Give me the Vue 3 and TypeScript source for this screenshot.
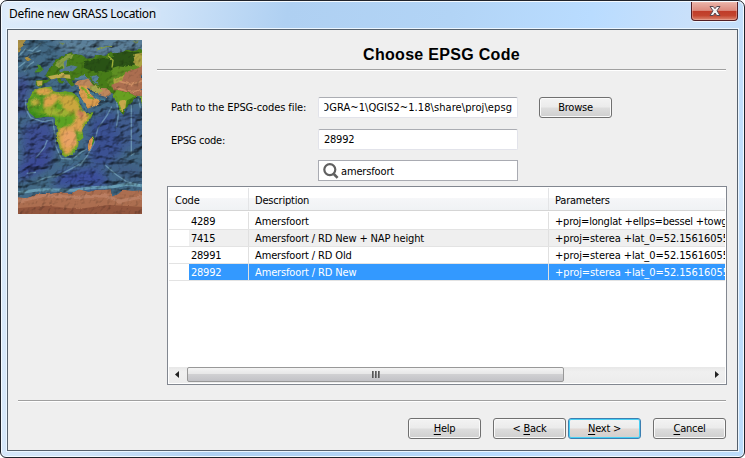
<script setup lang="ts">
interface EpsgRow {
  code: string
  description: string
  parameters: string
}

const rows: EpsgRow[] = [
  { code: '4289', description: 'Amersfoort', parameters: '+proj=longlat +ellps=bessel +towg' },
  { code: '7415', description: 'Amersfoort / RD New + NAP height', parameters: '+proj=sterea +lat_0=52.15616055' },
  { code: '28991', description: 'Amersfoort / RD Old', parameters: '+proj=sterea +lat_0=52.15616055' },
  { code: '28992', description: 'Amersfoort / RD New', parameters: '+proj=sterea +lat_0=52.15616055' },
]
const selected = '28992'
</script>

<template>
  <div class="window">
    <header class="titlebar">
      <span class="caption">Define new GRASS Location</span>
      <button class="close" aria-label="Close">
        <svg width="14" height="12" viewBox="0 0 14 12">
          <path d="M2 1.5H5.3L7 3.7L8.7 1.5H12L9 5.8L12 10.5H8.7L7 8L5.3 10.5H2L5 5.8Z" fill="#f4f4f4" stroke="#574750" stroke-width="1" stroke-linejoin="round" />
        </svg>
      </button>
    </header>

    <main class="client">
      <div class="page">
        <svg class="map" width="124" height="174" viewBox="24 15 372 522" preserveAspectRatio="none">
          <defs>
            <filter id="sea" x="0" y="0" width="100%" height="100%" color-interpolation-filters="sRGB">
              <feTurbulence type="fractalNoise" baseFrequency="0.03 0.045" numOctaves="4" seed="8" result="n" />
              <feDiffuseLighting in="n" surfaceScale="9" diffuseConstant="1.15" lighting-color="#ffffff" result="l">
                <feDistantLight azimuth="225" elevation="55" />
              </feDiffuseLighting>
              <feComposite in="SourceGraphic" in2="l" operator="arithmetic" k1="1" k2="0.05" k3="0" k4="0" />
            </filter>
            <filter id="land" x="0" y="0" width="100%" height="100%" color-interpolation-filters="sRGB">
              <feTurbulence type="fractalNoise" baseFrequency="0.06" numOctaves="3" seed="3" result="n" />
              <feDisplacementMap in="SourceGraphic" in2="n" scale="9" xChannelSelector="R" yChannelSelector="G" result="d" />
              <feDiffuseLighting in="n" surfaceScale="3" diffuseConstant="1.2" lighting-color="#ffffff" result="l">
                <feDistantLight azimuth="225" elevation="58" />
              </feDiffuseLighting>
              <feComposite in="d" in2="l" operator="arithmetic" k1="1" k2="0.02" k3="0" k4="0" result="c" />
              <feComposite in="c" in2="d" operator="in" />
            </filter>
            <filter id="soft"><feGaussianBlur stdDeviation="12" /></filter>
            <filter id="edge"><feGaussianBlur stdDeviation="3" /></filter>
            <filter id="shelf"><feGaussianBlur stdDeviation="2.2" /></filter>
            <clipPath id="africa">
              <path d="M72 165L90 158L124 154L130 168L150 172L162 168L184 171L198 176L206 196L219 224L229 235L251 231L244 248L225 270L217 286L221 308L207 320L204 338L190 358L166 367L156 360L145 327L139 310L144 286L134 268L135 250L124 244L98 247L77 250L57 232L51 217L56 190Z" />
            </clipPath>
          </defs>
          <g filter="url(#sea)">
            <rect x="24" y="15" width="372" height="522" fill="#406580" />
            <g filter="url(#soft)">
              <path d="M24 120L60 140L44 190L50 240L24 240Z" fill="#3c4690" />
              <path d="M36 270L120 255L136 320L130 370L40 380Z" fill="#3a4b8e" />
              <path d="M240 255L310 220L320 280L350 340L280 400L235 380Z" fill="#394e8c" />
              <path d="M24 390L110 360L130 390L90 410L24 440Z" fill="#374490" />
              <path d="M150 410L250 395L300 430L280 455L130 455Z" fill="#394894" />
              <path d="M300 370L396 390V440L320 430Z" fill="#3d5a80" />
              <path d="M320 240L390 220V350L330 330Z" fill="#3c5888" />
              <path d="M120 0H410V70H250L170 60Z" fill="#587a93" />
            </g>
            <g filter="url(#shelf)" fill="none" stroke="#80b0c2" stroke-width="4" opacity=".55">
              <path d="M48 192L46 220L62 248L98 260L128 255L133 286L138 335L154 370L184 372" />
              <path d="M24 98L48 79L62 57L92 46M24 65L46 43L68 48L94 24M43 109L58 90L72 80" />
              <path d="M190 370L216 350L230 342M208 393L230 365L252 325L264 280L292 240L305 215" />
              <path d="M320 200L325 240L319 278M364 211V360L374 354M385 190L391 218" />
              <path d="M80 440L106 428L140 423L174 406L218 383M285 390L320 420L350 440L390 450" />
              <path d="M77 370L103 337L112 315M50 415L78 412" />
            </g>
            <path filter="url(#shelf)" d="M24 473L90 464L190 466L242 458L306 456L350 448L396 452" fill="none" stroke="#76b0c2" stroke-width="9" opacity=".65" />
          </g>

          <g filter="url(#land)">
            <path d="M24 15H48L40 31L31 49L24 54ZM42 68L56 64L64 71L51 78Z" fill="#a58b42" />
            <path d="M78 136L76 151L92 158L103 145L118 139L124 127L142 133L156 151L163 143L150 129L164 128L175 143L185 155L195 150L185 137L205 135L222 129L243 136L245 150L258 161L278 160L298 171L310 177L322 190L329 228L340 241L348 220L358 211L371 197L382 184L396 184V43L367 48L351 43L330 56L304 51L286 62L264 59L247 70L230 70L216 60L201 58L185 51L162 60L140 72L128 88L117 102L105 122L118 133L96 135Z" fill="#467a18" />
            <path d="M74 113L90 112L101 104L91 90L80 88L85 99L77 105Z" fill="#488823" />
            <path d="M140 84L154 71L177 57L192 55L185 71L170 75L170 93L161 101L157 92L147 100L135 91Z" fill="#839b42" />
            <path d="M160 82L172 73L168 95L187 91L203 95L188 109L162 107L150 115L148 104L164 98Z" fill="#52788f" />
            <path d="M225 78L284 68L309 67L344 52L385 50L396 60V105L333 114L300 106L257 113L221 98Z" fill="#285015" />
            <path d="M307 99L341 88L396 53V130L344 141L303 157L286 141L307 128Z" fill="#5d8c22" />
            <path d="M310 56L350 48L376 56L380 88L340 96L306 90Z" fill="#2b5216" />
            <path d="M370 58L396 53V100L374 88ZM310 134L350 116L372 118L345 142L312 150Z" fill="#a8a040" />
            <path d="M346 111L377 102L396 94V183L374 182L347 171L311 166L304 149L335 139L340 128Z" fill="#a86c4e" />
            <path d="M328 139L365 149L396 137M315 157L358 171L393 165" fill="none" stroke="#c98a61" stroke-width="5" />
            <path d="M320 164L346 172L377 184L351 196L347 219L335 232L320 202L306 184Z" fill="#669d20" />
            <path d="M325 198L349 193L346 217L337 230Z" fill="#c3a449" />
            <path d="M388 184H396V215L390 200Z" fill="#7ba030" />
            <path d="M194 150L204 137L235 130L249 150L272 159L294 160L305 177L289 187L268 181L249 165L229 157Z" fill="#b9845a" />
            <path d="M237 152L263 152L279 171L264 177L246 168Z" fill="#a4a44a" />
            <path d="M205 150L229 152L239 166L252 185L273 195L262 210L233 222L221 202L207 179Z" fill="#d69a4d" />
            <path d="M213 157L226 165L238 188L253 191" fill="none" stroke="#7cab27" stroke-width="6" />
            <path d="M240 172L264 190L286 196" fill="none" stroke="#437990" stroke-width="6" />
            <path d="M78 138L98 137L96 151L83 154ZM114 124L153 116L180 119L182 132L161 128L140 130L123 134Z" fill="#b9a84c" />
            <path d="M244 124L261 119L265 132L258 139L268 149L254 147L246 136ZM188 132L210 122L224 120L236 130L223 134L200 134Z" fill="#557d95" />
            <path d="M306 98L309 76L294 62" fill="none" stroke="#9bad38" stroke-width="4" />
            <path d="M259 46L289 35L307 34" fill="none" stroke="#7f9848" stroke-width="4" />
            <path d="M145 22L168 24L160 32ZM362 17L390 16L380 24Z" fill="#718a5c" />
          </g>

          <g filter="url(#land)">
            <path d="M72 165L90 158L124 154L130 168L150 172L162 168L184 171L198 176L206 196L219 224L229 235L251 231L244 248L225 270L217 286L221 308L207 320L204 338L190 358L166 367L156 360L145 327L139 310L144 286L134 268L135 250L124 244L98 247L77 250L57 232L51 217L56 190Z" fill="#6fa021" />
            <g clip-path="url(#africa)">
              <g filter="url(#edge)">
                <path d="M51 190L74 181L100 168L122 184L106 208L90 231L58 228Z" fill="#4f9620" />
                <path d="M50 222L90 236L135 240L136 256L60 254Z" fill="#3a8a1c" />
                <path d="M77 165L105 158L129 166L115 180L83 177ZM103 190L136 175L151 184L138 200L125 214L101 218Z" fill="#d9a14b" />
                <path d="M62 196L84 190L90 206L66 214Z" fill="#b8ac3c" />
                <path d="M146 180L188 181L205 204L213 225L184 233L154 218Z" fill="#c7a43c" />
                <path d="M100 222L130 216L186 232L180 244L110 240Z" fill="#9cae30" />
                <path d="M137 204L158 205L157 225L140 229ZM158 170L194 172L190 182L160 180ZM134 246L184 240L193 270L163 283L139 270Z" fill="#5a9f22" />
                <path d="M194 232L215 226L239 244L221 265L215 295L203 312L198 345L167 360L154 337L145 307L150 280L180 274L199 254Z" fill="#d9a04f" />
                <path d="M205 222L222 232L219 250L205 246Z" fill="#c17653" />
                <path d="M194 285L216 292L217 308L200 318ZM185 345L206 323L204 348L180 366Z" fill="#65a329" />
                <path d="M161 292L182 285L197 293L195 327L169 338L158 320Z" fill="#e5a063" />
              </g>
            </g>
            <path d="M236 317L247 304L251 321L242 343L235 346L233 332Z" fill="#db9550" />
            <path d="M246 306L251 316L247 329" fill="none" stroke="#378d24" stroke-width="4" />
          </g>
          <path d="M202 177L230 224" stroke="#437990" stroke-width="6" />
          <g filter="url(#land)">
            <path d="M20 486L55 489L79 477L120 476L153 472L184 474L207 463L236 470L258 464L303 463L306 484L324 477L339 464L370 467L400 464V545H20Z" fill="#a96c4e" />
            <path d="M20 500L99 482L196 487L283 482L330 498L400 485" fill="none" stroke="#b67c60" stroke-width="10" />
            <path d="M20 520L110 512L200 522L300 510L400 516V545H20Z" fill="#8e533c" />
          </g>
        </svg>

        <section class="content">
          <h1>Choose EPSG Code</h1>
          <div class="form">
            <label class="l-path">Path to the EPSG-codes file:</label>
            <div class="field right"><span class="t-path">OGRA~1\QGIS2~1.18\share\proj\epsg</span></div>
            <button class="btn"><span>Browse</span></button>
            <label class="l-code">EPSG code:</label>
            <div class="field code"><span>28992</span></div>
            <div class="field search">
              <svg width="16" height="16" viewBox="0 0 16 16" fill="none" stroke="#606060">
                <circle cx="6.8" cy="6.6" r="5.5" stroke-width="2.2" />
                <path d="M10.8 11L14.6 14.8" stroke-width="2.6" />
              </svg>
              <span class="t-search">amersfoort</span>
            </div>
          </div>

          <div class="list">
            <div class="head">
              <span>Code</span><span>Description</span><span>Parameters</span>
            </div>
            <div v-for="row in rows" :key="row.code" class="row" :class="{ selected: row.code === selected }">
              <i class="indent"></i>
              <span class="c-code">{{ row.code }}</span>
              <span class="c-desc">{{ row.description }}</span>
              <span class="c-par">{{ row.parameters }}</span>
            </div>
            <div class="scroll">
              <svg class="arrow" width="18" height="16" viewBox="0 0 18 16"><path d="M6 7.5L10 4V11Z" fill="#222" /></svg>
              <div class="thumb"><i></i><i></i><i></i></div>
              <svg class="arrow end" width="18" height="16" viewBox="0 0 18 16"><path d="M12 7.5L8 4V11Z" fill="#222" /></svg>
            </div>
          </div>
        </section>
      </div>

      <footer>
        <button class="btn help"><span><u>H</u>elp</span></button>
        <button class="btn back"><span>&lt; <u>B</u>ack</span></button>
        <button class="btn next"><span><u>N</u>ext &gt;</span></button>
        <button class="btn"><span><u>C</u>ancel</span></button>
      </footer>
    </main>
  </div>
</template>

<style>
body { background: #fff; overflow: hidden; }
</style>

<style scoped>
* { box-sizing: border-box; }
.window {
  width: 745px; height: 458px; padding: 1px 6px 5px 6px;
  border: 1px solid #20232b; border-radius: 7px 7px 6px 6px;
  box-shadow: inset 0 0 0 1px #f4faff;
  background: linear-gradient(100deg, #dcebfa 0, #cfe3f8 20%, #afd0f2 35%, #b2d4f6 55%, #b9dcff 72%, #c9e0fa 84%, #bbdcfb 100%);
  font: 11px/13px "DejaVu Sans Condensed", "DejaVu Sans", sans-serif;
  font-stretch: condensed; letter-spacing: -0.25px; color: #000;
}
.titlebar { height: 27px; display: flex; justify-content: space-between; align-items: flex-start; }
.caption {
  padding: 4px 8px 3px 2px; font: 12px/16px "Noto Sans", sans-serif; letter-spacing: -0.32px;
  text-shadow: 0 0 8px #fff, 0 0 8px #fff;
}
.close {
  width: 47px; height: 19px; padding: 0; display: flex; align-items: center; justify-content: center;
  border: 1px solid #511e25; border-top: 0; border-radius: 0 0 4px 4px;
  background: linear-gradient(#eab4a9 0, #dc8b7e 47%, #bf3b28 50%, #c3452f 75%, #dc8671 100%);
  box-shadow: inset 0 0 0 1px #f2c2b866, 0 1px 0 #ffffffaa;
}
.client {
  height: 422px; border: 1px solid #56616d; background: #efefef;
  box-shadow: 0 0 0 1px #ecf6ff; padding: 10px 11px 0 10px; display: flex; flex-direction: column;
}
.page { display: flex; gap: 15px; height: 361px; border-bottom: 1px solid #a0a0a0; box-shadow: 0 1px 0 #fff; }
.map { display: block; flex: none; }
.content { flex: 1; min-width: 0; }
h1 {
  margin: 0; height: 30px; border-bottom: 1px solid #a0a0a0; box-shadow: 0 1px 0 #fff;
  font: bold 16px/29px "Liberation Sans", Arial, sans-serif; text-align: center; letter-spacing: 0.3px;
}
.form {
  display: grid; grid-template-columns: 147px 200px 94px; grid-template-rows: 21px 21px 21px;
  row-gap: 11px; padding: 27px 0 0 14px; height: 116px;
}
.form .btn { margin-left: 21px; }
label { line-height: 22px; white-space: nowrap; }
.l-path { letter-spacing: -0.08px; }
.l-code { line-height: 24px; }
.t-path { letter-spacing: 0.08px; clip-path: inset(0 0 0 3px); }
.t-search { letter-spacing: -0.15px; }
.field {
  background: #fff; border: 1px solid #e2e3ea; border-top-color: #abadb3; border-radius: 2px;
  padding: 0 5px; line-height: 19px; display: flex; overflow: hidden; white-space: nowrap;
}
.right { justify-content: flex-end; }
.code { grid-column: 2; }
.search { grid-column: 2; margin-top: -1px; height: 21px; border-color: #a9abb2; border-radius: 0; align-items: center; padding: 0 4px; gap: 2px; line-height: 19px; }
.search svg { display: block; }
.search span { padding-top: 1px; }
.btn {
  width: 73px; height: 21px; padding: 1px 0 0; border: 1px solid #707070; border-radius: 3px;
  background: linear-gradient(#f3f3f3 0, #ebebeb 48%, #dddddd 52%, #cfcfcf 100%);
  box-shadow: inset 0 0 0 1px #fafafa; font: inherit; font-stretch: condensed; letter-spacing: inherit; color: #000; line-height: 18px;
}
u { text-underline-offset: 2px; text-decoration-thickness: 1px; }
.list {
  width: 560px; height: 199px; margin-left: 10px; border: 1px solid #828790; background: #fff;
  padding: 1px; display: flex; flex-direction: column; overflow: hidden;
}
.head {
  display: grid; grid-template-columns: 80px 300px 176px; height: 23px; flex: none;
  background: linear-gradient(#fff 0, #fff 45%, #f5f6f8 48%, #f0f2f4 100%); border-bottom: 1px solid #d5d5d5;
  margin-bottom: 1px; line-height: 26px; letter-spacing: -0.2px;
}
.head span { height: 22px; padding-left: 6px; border-right: 1px solid #e3e4e6; }
.head span:last-child { border-right: 0; }
.row {
  display: grid; grid-template-columns: 20px 60px 300px 176px; height: 17px; flex: none;
  border-bottom: 1px solid #e3e3e3; line-height: 18px;
}
.row:nth-child(2) { height: 18px; line-height: 19px; }
.row span { overflow: hidden; white-space: nowrap; padding-left: 6px; border-right: 1px solid #e0e0e0; }
.row .c-code { padding-left: 2px; }
.row .c-desc { letter-spacing: -0.14px; }
.row .c-par { border-right: 0; letter-spacing: -0.08px; }
.row:nth-child(2) .c-par { letter-spacing: -0.22px; }
.indent { background: #fff; }
.row:nth-child(3) { background: #efefef; }
.selected { background: #3399ff; color: #fff; }
.scroll { margin-top: auto; height: 16px; flex: none; display: flex; background: linear-gradient(#e7e7e7, #f0f0f0 30%, #ececec); }
.arrow { flex: none; }
.end { margin-left: auto; }
.thumb {
  width: 377px; height: 15px; border: 1px solid #989898; border-radius: 2px;
  background: linear-gradient(#f4f4f4 0, #e7e7e7 45%, #d0d0d2 50%, #c2c2c6 100%);
  display: flex; gap: 1px; align-items: center; justify-content: center;
}
.thumb i { width: 2px; height: 7px; background: linear-gradient(90deg, #444, #999); }
footer { display: flex; justify-content: flex-end; padding-top: 17px; }
.help { margin-right: 12px; }
.back { margin-right: 2px; }
.next {
  margin-right: 12px; border-color: #3c7fb1; box-shadow: inset 0 0 0 1px #48d0f5;
  background: linear-gradient(#f3f3f3 0, #ebebeb 48%, #e1d8d4 52%, #d2cfce 100%);
}
</style>
